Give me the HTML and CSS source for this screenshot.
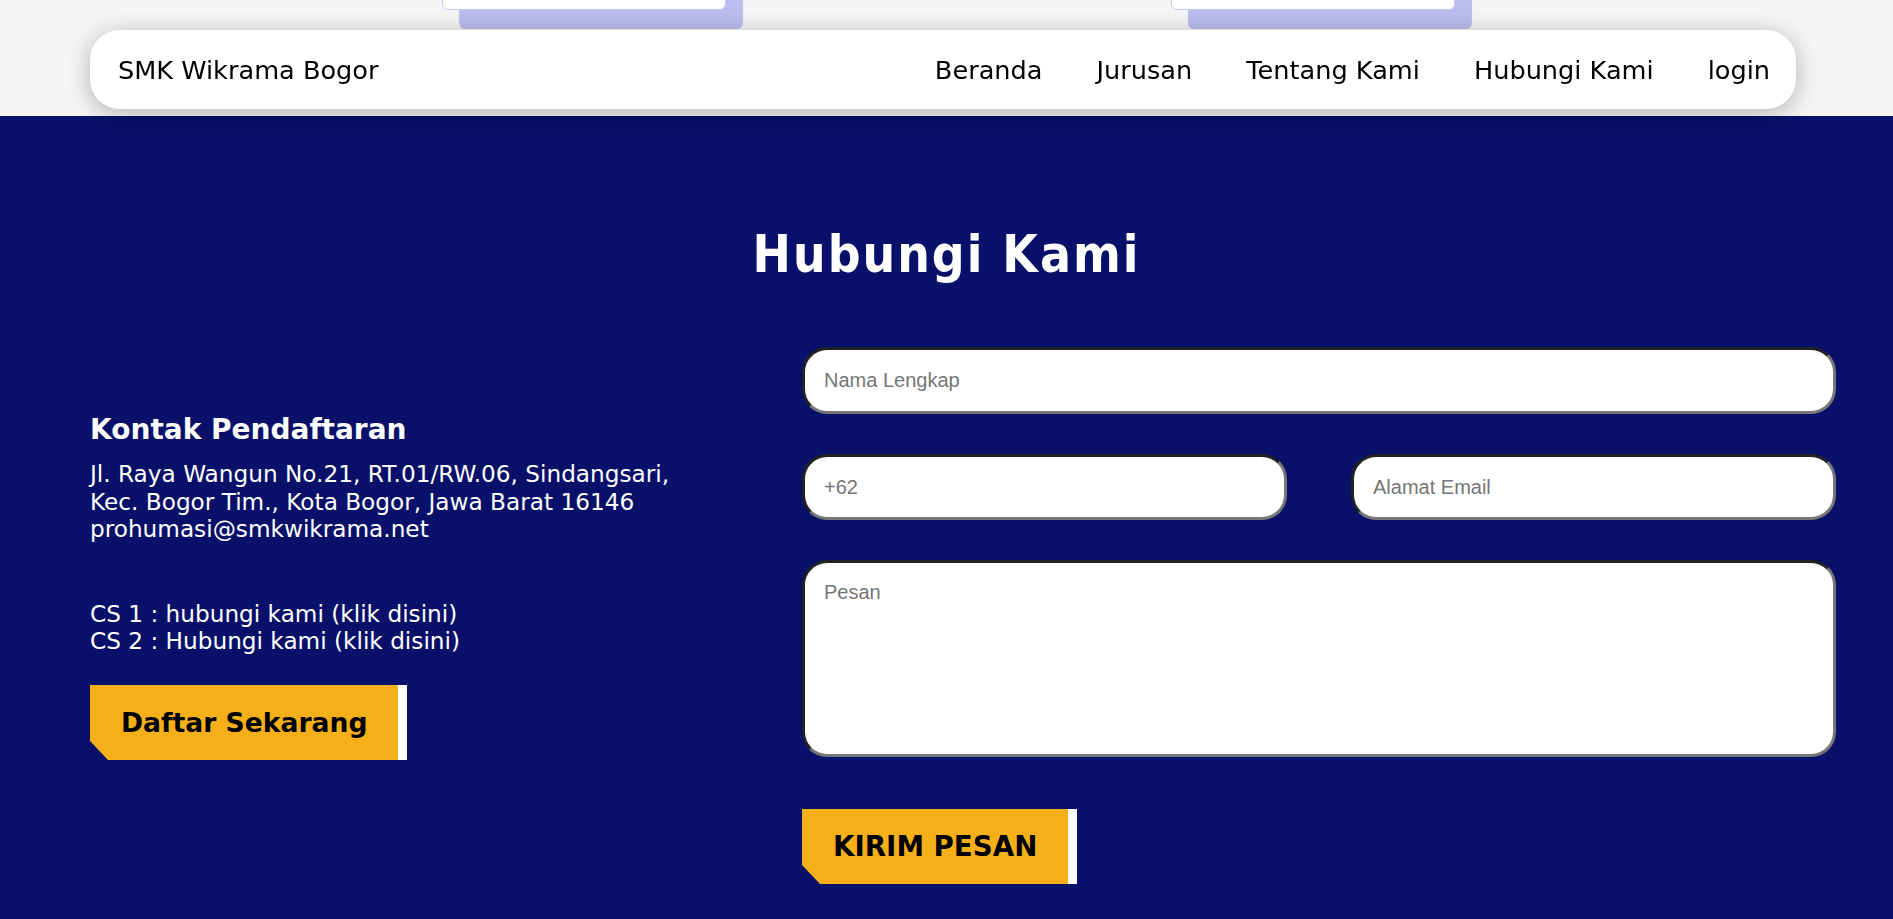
FILE: index.html
```html
<!DOCTYPE html>
<html lang="id">
<head>
<meta charset="utf-8">
<title>Hubungi Kami - SMK Wikrama Bogor</title>
<link rel="stylesheet" href="styles.css">
</head>
<body>
<nav class="navbar">
  <div class="brand">SMK Wikrama Bogor</div>
  <ul class="menu">
    <li><a href="#">Beranda</a></li>
    <li><a href="#">Jurusan</a></li>
    <li><a href="#">Tentang Kami</a></li>
    <li><a href="#">Hubungi Kami</a></li>
    <li><a href="#">login</a></li>
  </ul>
</nav>

<div class="prev">
  <div class="card card-a"></div>
  <div class="card card-b"></div>
</div>

<section class="contact">
  <h2 class="title">Hubungi Kami</h2>
  <div class="contact-grid">
    <div class="info">
      <h3 class="info-title">Kontak Pendaftaran</h3>
      <p class="addr">Jl. Raya Wangun No.21, RT.01/RW.06, Sindangsari,<br>Kec. Bogor Tim., Kota Bogor, Jawa Barat 16146<br>prohumasi@smkwikrama.net</p>
      <p class="cs">CS 1 : hubungi kami (klik disini)<br>CS 2 : Hubungi kami (klik disini)</p>
      <a class="btn btn-daftar" href="#">Daftar Sekarang</a>
    </div>
    <form class="form">
      <input class="field field-name" type="text" placeholder="Nama Lengkap">
      <div class="row">
        <input class="field field-half" type="text" placeholder="+62">
        <input class="field field-half" type="email" placeholder="Alamat Email">
      </div>
      <textarea class="field field-msg" placeholder="Pesan"></textarea>
      <div class="actions">
        <button class="btn btn-kirim" type="button">KIRIM PESAN</button>
      </div>
    </form>
  </div>
</section>
</body>
</html>
```

FILE: styles.css
```css
* { box-sizing: border-box; }

body {
  margin: 0;
  background: #f5f5f5;
  font-family: "DejaVu Sans", Verdana, sans-serif;
  color: #000;
}

/* navbar */
.navbar {
  position: fixed;
  top: 30px;
  left: 90px;
  right: 97px;
  height: 79px;
  background: #fff;
  border-radius: 30px;
  box-shadow: 0 4px 24px rgba(0, 0, 0, 0.28);
  display: flex;
  align-items: center;
  justify-content: space-between;
  padding: 0 26px 0 28px;
  z-index: 10;
}

.brand {
  font-size: 25.6px;
}

.menu {
  list-style: none;
  margin: 0;
  padding: 0;
  display: flex;
  gap: 54px;
}

.menu a {
  color: #000;
  text-decoration: none;
  font-size: 25.6px;
}

/* previous section peeking */
.prev {
  height: 116px;
  display: flex;
  overflow: hidden;
}

.card {
  width: 284px;
  height: 40px;
  margin-top: -30px;
  background: #fff;
  border: 1px solid #c6c6f2;
  border-radius: 6px;
  box-shadow: 17px 19px 1px #bcbcee;
}

.card-a { margin-left: 442px; }
.card-b { margin-left: 445px; }

/* contact section */
.contact {
  background: #08106a;
  color: #fff;
  padding: 111px 0 60px;
}

.title {
  margin: 0;
  text-align: center;
  font-family: "DejaVu Sans Condensed", "DejaVu Sans", sans-serif;
  font-stretch: condensed;
  font-weight: bold;
  font-size: 51px;
  letter-spacing: 2px;
  line-height: 56px;
}

.contact-grid {
  display: flex;
  margin-top: 64px;
  padding: 0 57px 0 90px;
}

.info {
  flex: 0 0 712px;
  padding-top: 66px;
}

.info-title {
  margin: 0 0 14px;
  font-size: 28px;
  line-height: 33px;
  font-weight: bold;
}

.addr, .cs {
  margin: 0;
  font-size: 23.2px;
  line-height: 27.6px;
}

.cs { margin-top: 57px; }

.btn {
  display: inline-block;
  height: 75px;
  line-height: 75px;
  padding: 0 31px;
  background: #f5b019;
  border: none;
  border-right: 9px solid #fff;
  color: #000;
  font-family: "DejaVu Sans", Verdana, sans-serif;
  font-weight: bold;
  font-size: 26.6px;
  text-decoration: none;
  clip-path: polygon(0 0, 100% 0, 100% 100%, 18px 100%, 0 calc(100% - 19px));
  cursor: pointer;
}

.btn-daftar { margin-top: 30px; }
.btn-kirim { font-size: 27.7px; }

/* form */
.form {
  flex: 1;
  display: flex;
  flex-direction: column;
}

.field {
  display: block;
  width: 100%;
  background: #fff;
  border-style: solid;
  border-width: 3px;
  border-color: #222 #777 #777 #222;
  border-radius: 25px;
  padding: 0 19px;
  font-family: "Liberation Sans", Arial, sans-serif;
  font-size: 20px;
  color: #000;
  outline: none;
}

.field::placeholder { color: #757575; }

.field-name { height: 67px; }

.row {
  display: flex;
  gap: 64px;
  margin-top: 40px;
}

.field-half { height: 66px; flex: 1; }

.field-msg {
  height: 197px;
  margin-top: 40px;
  padding: 18px 19px;
  resize: none;
}

.actions { margin-top: 52px; }
```
